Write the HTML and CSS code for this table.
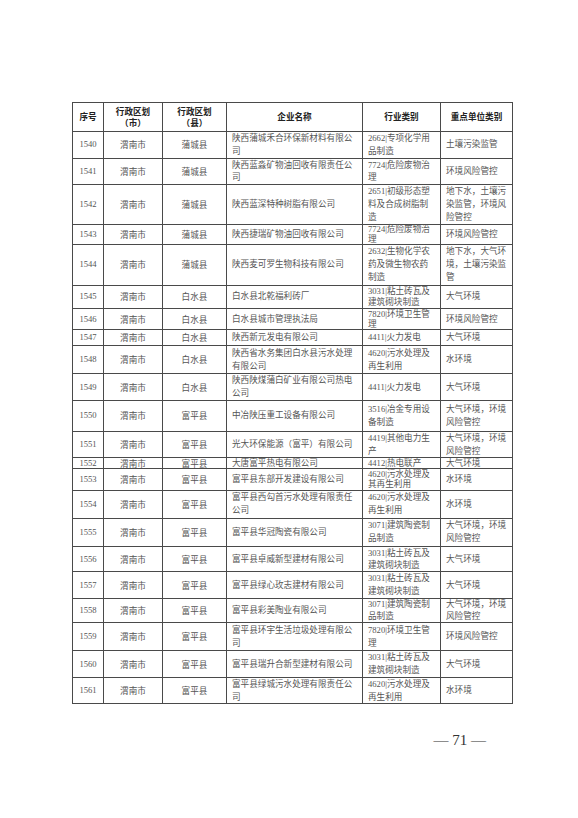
FILE: index.html
```html
<!DOCTYPE html>
<html lang="zh-CN">
<head>
<meta charset="utf-8">
<title>重点排污单位名录</title>
<link rel="stylesheet" href="styles.css">
</head>
<body>
<div class="page">
  <table class="list">
    <colgroup>
      <col class="c-no"><col class="c-city"><col class="c-county"><col class="c-name"><col class="c-ind"><col class="c-type">
    </colgroup>
    <thead>
      <tr class="head">
        <th>序号</th>
        <th>行政区划<br>（市）</th>
        <th>行政区划<br>（县）</th>
        <th>企业名称</th>
        <th>行业类别</th>
        <th>重点单位类别</th>
      </tr>
    </thead>
    <tbody>
      <tr class="h27"><td class="num">1540</td><td class="ctr">渭南市</td><td class="ctr">蒲城县</td><td class="txt">陕西蒲城禾合环保新材料有限公司</td><td class="txt">2662|专项化学用品制造</td><td class="txt">土壤污染监管</td></tr>
      <tr class="h26"><td class="num">1541</td><td class="ctr">渭南市</td><td class="ctr">蒲城县</td><td class="txt">陕西蓝淼矿物油回收有限责任公司</td><td class="txt">7724|危险废物治理</td><td class="txt">环境风险管控</td></tr>
      <tr class="h40"><td class="num">1542</td><td class="ctr">渭南市</td><td class="ctr">蒲城县</td><td class="txt">陕西蓝深特种树脂有限公司</td><td class="txt">2651|初级形态塑料及合成树脂制造</td><td class="txt">地下水，土壤污染监管，环境风险管控</td></tr>
      <tr class="h19"><td class="num">1543</td><td class="ctr">渭南市</td><td class="ctr">蒲城县</td><td class="txt">陕西捷瑞矿物油回收有限公司</td><td class="txt">7724|危险废物治理</td><td class="txt">环境风险管控</td></tr>
      <tr class="h41"><td class="num">1544</td><td class="ctr">渭南市</td><td class="ctr">蒲城县</td><td class="txt">陕西麦可罗生物科技有限公司</td><td class="txt">2632|生物化学农药及微生物农药制造</td><td class="txt">地下水，大气环境，土壤污染监管</td></tr>
      <tr class="h22"><td class="num">1545</td><td class="ctr">渭南市</td><td class="ctr">白水县</td><td class="txt">白水县北乾福利砖厂</td><td class="txt">3031|粘土砖瓦及建筑砌块制造</td><td class="txt">大气环境</td></tr>
      <tr class="h21"><td class="num">1546</td><td class="ctr">渭南市</td><td class="ctr">白水县</td><td class="txt">白水县城市管理执法局</td><td class="txt">7820|环境卫生管理</td><td class="txt">环境风险管控</td></tr>
      <tr class="h16"><td class="num">1547</td><td class="ctr">渭南市</td><td class="ctr">白水县</td><td class="txt">陕西新元发电有限公司</td><td class="txt">4411|火力发电</td><td class="txt">大气环境</td></tr>
      <tr class="h28"><td class="num">1548</td><td class="ctr">渭南市</td><td class="ctr">白水县</td><td class="txt">陕西省水务集团白水县污水处理有限公司</td><td class="txt">4620|污水处理及再生利用</td><td class="txt">水环境</td></tr>
      <tr class="h27"><td class="num">1549</td><td class="ctr">渭南市</td><td class="ctr">白水县</td><td class="txt">陕西陕煤蒲白矿业有限公司热电公司</td><td class="txt">4411|火力发电</td><td class="txt">大气环境</td></tr>
      <tr class="h31"><td class="num">1550</td><td class="ctr">渭南市</td><td class="ctr">富平县</td><td class="txt">中冶陕压重工设备有限公司</td><td class="txt">3516|冶金专用设备制造</td><td class="txt">大气环境，环境风险管控</td></tr>
      <tr class="h26"><td class="num">1551</td><td class="ctr">渭南市</td><td class="ctr">富平县</td><td class="txt">光大环保能源（富平）有限公司</td><td class="txt">4419|其他电力生产</td><td class="txt">大气环境，环境风险管控</td></tr>
      <tr class="h11"><td class="num">1552</td><td class="ctr">渭南市</td><td class="ctr">富平县</td><td class="txt">大唐富平热电有限公司</td><td class="txt">4412|热电联产</td><td class="txt">大气环境</td></tr>
      <tr class="h21b"><td class="num">1553</td><td class="ctr">渭南市</td><td class="ctr">富平县</td><td class="txt">富平县东部开发建设有限公司</td><td class="txt">4620|污水处理及其再生利用</td><td class="txt">水环境</td></tr>
      <tr class="h28"><td class="num">1554</td><td class="ctr">渭南市</td><td class="ctr">富平县</td><td class="txt">富平县西勾首污水处理有限责任公司</td><td class="txt">4620|污水处理及再生利用</td><td class="txt">水环境</td></tr>
      <tr class="h28"><td class="num">1555</td><td class="ctr">渭南市</td><td class="ctr">富平县</td><td class="txt">富平县华冠陶瓷有限公司</td><td class="txt">3071|建筑陶瓷制品制造</td><td class="txt">大气环境，环境风险管控</td></tr>
      <tr class="h25"><td class="num">1556</td><td class="ctr">渭南市</td><td class="ctr">富平县</td><td class="txt">富平县卓威新型建材有限公司</td><td class="txt">3031|粘土砖瓦及建筑砌块制造</td><td class="txt">大气环境</td></tr>
      <tr class="h27"><td class="num">1557</td><td class="ctr">渭南市</td><td class="ctr">富平县</td><td class="txt">富平县绿心玫志建材有限公司</td><td class="txt">3031|粘土砖瓦及建筑砌块制造</td><td class="txt">大气环境</td></tr>
      <tr class="h23"><td class="num">1558</td><td class="ctr">渭南市</td><td class="ctr">富平县</td><td class="txt">富平县彩美陶业有限公司</td><td class="txt">3071|建筑陶瓷制品制造</td><td class="txt">大气环境，环境风险管控</td></tr>
      <tr class="h28"><td class="num">1559</td><td class="ctr">渭南市</td><td class="ctr">富平县</td><td class="txt">富平县环宇生活垃圾处理有限公司</td><td class="txt">7820|环境卫生管理</td><td class="txt">环境风险管控</td></tr>
      <tr class="h27"><td class="num">1560</td><td class="ctr">渭南市</td><td class="ctr">富平县</td><td class="txt">富平县瑞升合新型建材有限公司</td><td class="txt">3031|粘土砖瓦及建筑砌块制造</td><td class="txt">大气环境</td></tr>
      <tr class="h25"><td class="num">1561</td><td class="ctr">渭南市</td><td class="ctr">富平县</td><td class="txt">富平县绿城污水处理有限责任公司</td><td class="txt">4620|污水处理及再生利用</td><td class="txt">水环境</td></tr>
    </tbody>
  </table>
  <div class="footer"><span class="pageno">— 71 —</span></div>
</div>
</body>
</html>
```
FILE: styles.css
```css
html, body {
  margin: 0;
  padding: 0;
  background: #ffffff;
}
.page {
  width: 578px;
  height: 818px;
  box-sizing: border-box;
  padding: 102px 0 0 72px;
  font-family: "Liberation Serif", "Noto Sans CJK SC", serif;
  color: #555;
}
.list {
  width: 440px;
  table-layout: fixed;
  border-collapse: collapse;
  border: 1.5px solid #1e1e1e;
  font-size: 8.6px;
  line-height: 13px;
}
.c-no { width: 31px; }
.c-city { width: 59px; }
.c-county { width: 64px; }
.c-name { width: 136px; }
.c-ind { width: 78px; }
.c-type { width: 72px; }
.list th, .list td {
  border: 1px solid #4a4a4a;
  padding: 0 5px;
  vertical-align: middle;
  overflow: visible;
}
.list th {
  font-family: "Noto Sans CJK SC", sans-serif;
  font-weight: 700;
  font-size: 8.6px;
  line-height: 11px;
  color: #222;
  text-align: center;
  padding: 0 2px;
}
.head { height: 28.7px; }
.list td.num {
  text-align: center;
  padding: 0;
  font-family: "Liberation Serif", serif;
}
.list td.ctr {
  text-align: center;
  font-family: "Noto Sans CJK SC", sans-serif;
}
.list td.txt {
  text-align: left;
  font-family: "Liberation Serif", "Noto Sans CJK SC", serif;
}
.h11 { height: 11px; line-height: 10px; }
.h16 { height: 15.8px; }
.h19 { height: 19.4px; line-height: 9.5px; }
.h21 { height: 21px; line-height: 10.3px; }
.h21b { height: 20.7px; line-height: 10.2px; }
.h22 { height: 22.4px; line-height: 11px; }
.h23 { height: 23.4px; line-height: 11.5px; }
.h25 { height: 25px; line-height: 12.3px; }
.h26 { height: 25.7px; line-height: 12.7px; }
.h27 { height: 26.7px; }
.h28 { height: 28px; }
.h31 { height: 30.8px; }
.h40 { height: 40px; }
.h41 { height: 40.6px; }
.footer {
  display: flex;
  justify-content: flex-end;
  padding: 27px 92px 0 0;
  margin-left: -72px;
}
.pageno {
  font-family: "Liberation Serif", serif;
  font-size: 15px;
  line-height: 18px;
  color: #333;
  white-space: nowrap;
}
```
